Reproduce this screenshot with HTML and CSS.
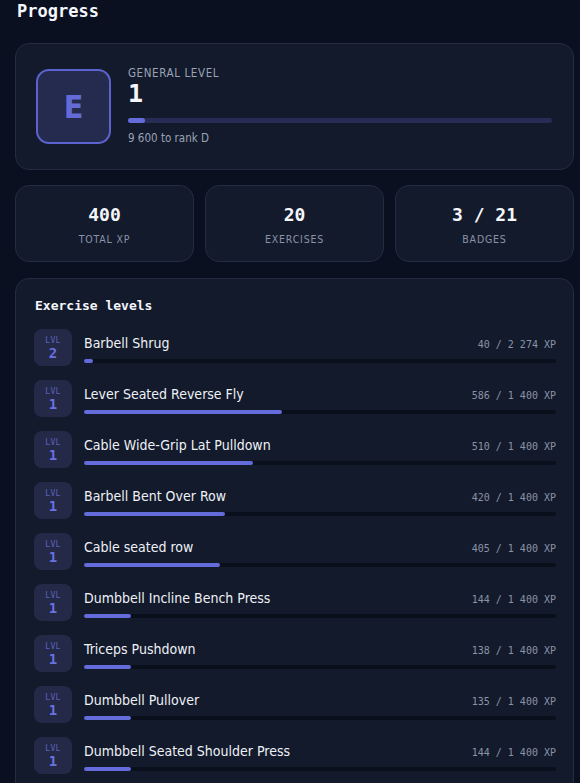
FILE: index.html
```html
<!DOCTYPE html>
<html lang="en">
<head>
  <meta charset="UTF-8" />
  <meta name="viewport" content="width=device-width, initial-scale=1.0"/>
  <title>Progress</title>
  <link rel="stylesheet" href="styles.css">
</head>
<body>
  <h2>Progress</h2>

  <div class="card rank-card">
    <div class="rank">E</div>
    <div class="rank-info">
      <div class="caption">General level</div>
      <div class="level">1</div>
      <div class="track"><div class="fill" style="width: 4%"></div></div>
      <div class="hint">9 600 to rank D</div>
    </div>
  </div>

  <div class="stats">
    <div class="card stat"><div class="stat-value">400</div><div class="stat-label">Total XP</div></div>
    <div class="card stat"><div class="stat-value">20</div><div class="stat-label">Exercises</div></div>
    <div class="card stat"><div class="stat-value">3 / 21</div><div class="stat-label">Badges</div></div>
  </div>

  <div class="card exercises">
    <h3>Exercise levels</h3>
    <div class="row">
      <div class="lvl"><span>LVL</span>2</div>
      <div class="row-main">
        <div class="row-head"><span class="name">Barbell Shrug</span><span class="xp">40 / 2 274 XP</span></div>
        <div class="bar"><div class="bar-fill" style="width: 2%"></div></div>
      </div>
    </div>
    <div class="row">
      <div class="lvl"><span>LVL</span>1</div>
      <div class="row-main">
        <div class="row-head"><span class="name">Lever Seated Reverse Fly</span><span class="xp">586 / 1 400 XP</span></div>
        <div class="bar"><div class="bar-fill" style="width: 41.9%"></div></div>
      </div>
    </div>
    <div class="row">
      <div class="lvl"><span>LVL</span>1</div>
      <div class="row-main">
        <div class="row-head"><span class="name">Cable Wide-Grip Lat Pulldown</span><span class="xp">510 / 1 400 XP</span></div>
        <div class="bar"><div class="bar-fill" style="width: 35.8%"></div></div>
      </div>
    </div>
    <div class="row">
      <div class="lvl"><span>LVL</span>1</div>
      <div class="row-main">
        <div class="row-head"><span class="name">Barbell Bent Over Row</span><span class="xp">420 / 1 400 XP</span></div>
        <div class="bar"><div class="bar-fill" style="width: 29.8%"></div></div>
      </div>
    </div>
    <div class="row">
      <div class="lvl"><span>LVL</span>1</div>
      <div class="row-main">
        <div class="row-head"><span class="name">Cable seated row</span><span class="xp">405 / 1 400 XP</span></div>
        <div class="bar"><div class="bar-fill" style="width: 28.8%"></div></div>
      </div>
    </div>
    <div class="row">
      <div class="lvl"><span>LVL</span>1</div>
      <div class="row-main">
        <div class="row-head"><span class="name">Dumbbell Incline Bench Press</span><span class="xp">144 / 1 400 XP</span></div>
        <div class="bar"><div class="bar-fill" style="width: 10%"></div></div>
      </div>
    </div>
    <div class="row">
      <div class="lvl"><span>LVL</span>1</div>
      <div class="row-main">
        <div class="row-head"><span class="name">Triceps Pushdown</span><span class="xp">138 / 1 400 XP</span></div>
        <div class="bar"><div class="bar-fill" style="width: 10%"></div></div>
      </div>
    </div>
    <div class="row">
      <div class="lvl"><span>LVL</span>1</div>
      <div class="row-main">
        <div class="row-head"><span class="name">Dumbbell Pullover</span><span class="xp">135 / 1 400 XP</span></div>
        <div class="bar"><div class="bar-fill" style="width: 10%"></div></div>
      </div>
    </div>
    <div class="row">
      <div class="lvl"><span>LVL</span>1</div>
      <div class="row-main">
        <div class="row-head"><span class="name">Dumbbell Seated Shoulder Press</span><span class="xp">144 / 1 400 XP</span></div>
        <div class="bar"><div class="bar-fill" style="width: 10%"></div></div>
      </div>
    </div>
  </div>
</body>
</html>
```

FILE: styles.css
```css
body {
  margin: 0;
  padding: 0 6px 0 15px;
  background: #0b1020;
  color: #e8ecf4;
  font-family: "DejaVu Sans Condensed", "DejaVu Sans", sans-serif;
  font-stretch: condensed;
  overflow: hidden;
}
h2 {
  font-family: "DejaVu Sans Mono", monospace;
  font-size: 17px;
  line-height: 22px;
  margin: 0 0 21px 2px;
  color: #f4f6fb;
}
.card {
  background: #131a2b;
  border: 1px solid #232c42;
  border-radius: 14px;
  box-sizing: border-box;
}
.rank-card {
  display: flex;
  align-items: center;
  gap: 17px;
  padding: 20px;
  height: 127px;
}
.rank {
  width: 75px;
  height: 75px;
  flex: none;
  box-sizing: border-box;
  border: 2px solid #5c63cf;
  border-radius: 13px;
  background: #252a4f;
  color: #646bd6;
  font-size: 32px;
  font-weight: bold;
  display: flex;
  align-items: center;
  justify-content: center;
}
.rank-info {
  flex: 1;
  padding-right: 1px;
}
.caption {
  font-size: 11.5px;
  letter-spacing: 0.6px;
  text-transform: uppercase;
  color: #9aa2b6;
  line-height: 14px;
  margin-top: -2px;
}
.level {
  font-family: "DejaVu Sans Mono", monospace;
  font-weight: bold;
  font-size: 25px;
  line-height: 28px;
  color: #f4f6fb;
}
.track {
  height: 5px;
  background: #272c54;
  border-radius: 3px;
  margin: 10px 0 8px;
}
.fill {
  height: 100%;
  background: #646bdb;
  border-radius: 3px;
}
.hint {
  font-size: 11.5px;
  color: #9aa2b6;
  line-height: 14px;
}
.stats {
  display: grid;
  grid-template-columns: repeat(3, 1fr);
  gap: 11px;
  margin: 15px 0 16px;
}
.stat {
  height: 77px;
  display: flex;
  flex-direction: column;
  align-items: center;
  justify-content: center;
  gap: 8px;
  padding-top: 2px;
}
.stat-value {
  font-family: "DejaVu Sans Mono", monospace;
  font-weight: bold;
  font-size: 18px;
  color: #f4f6fb;
}
.stat-label {
  font-size: 10.5px;
  letter-spacing: 0.8px;
  text-transform: uppercase;
  color: #8a93a8;
}
.exercises {
  padding: 18px 17px 10px 18px;
  border-bottom-left-radius: 0;
  border-bottom-right-radius: 0;
}
.exercises h3 {
  font-family: "DejaVu Sans Mono", monospace;
  font-size: 13px;
  margin: 1px 0 16px 1px;
  color: #f4f6fb;
}
.row {
  display: flex;
  gap: 12px;
  margin-bottom: 14px;
}
.lvl {
  width: 38px;
  height: 37px;
  flex: none;
  border-radius: 8px;
  background: #242948;
  color: #6a71e0;
  font-family: "DejaVu Sans Mono", monospace;
  font-weight: bold;
  font-size: 14px;
  line-height: 14px;
  display: flex;
  flex-direction: column;
  align-items: center;
  justify-content: center;
}
.lvl span {
  font-size: 8px;
  line-height: 10px;
  font-weight: normal;
  color: #5a61b8;
  letter-spacing: 0.3px;
}
.row-main {
  flex: 1;
  padding-top: 6px;
}
.row-head {
  display: flex;
  justify-content: space-between;
  align-items: baseline;
}
.name {
  font-size: 14px;
  color: #eef1f7;
}
.xp {
  font-family: "DejaVu Sans Mono", monospace;
  font-size: 10px;
  color: #8a93a8;
}
.bar {
  height: 4px;
  background: #0a0f1c;
  border-radius: 2px;
  margin-top: 8px;
}
.bar-fill {
  height: 100%;
  background: #646bdb;
  border-radius: 2px;
}
```
